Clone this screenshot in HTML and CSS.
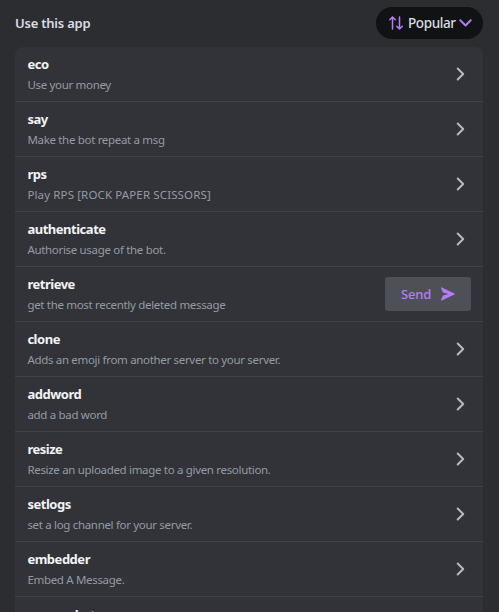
FILE: index.html
```
<!DOCTYPE html>
<html lang="en">
<head>
<meta charset="utf-8">
<title>App commands</title>
<link rel="stylesheet" href="styles.css">
</head>
<body>
<svg width="0" height="0" class="defs"><symbol id="chev" viewBox="0 0 10 16"><path d="M1.700 2.500 7.200 8 1.700 13.500"/></symbol></svg>
<main class="panel">
<header class="header">
<h1 class="heading">Use this app</h1>
<button class="sort">
<svg class="sort-arrows" width="14" height="14" viewBox="0 0 14 14"><path d="M3.5 13V1M.8 3.8 3.5 1l2.8 2.8M10.5 1v12M7.7 10.2l2.8 2.8 2.8-2.8"/></svg>
<span class="sort-label">Popular</span>
<svg class="sort-chevron" width="13" height="8" viewBox="0 0 13 8"><path d="M1.3 1.3 6.500 6.500l5.200-5.200"/></svg>
</button>
</header>
<ul class="list">
<li class="row"><div class="text"><h2 class="name">eco</h2><p class="desc">Use your money</p></div><svg class="go"><use href="#chev"/></svg></li>
<li class="row"><div class="text"><h2 class="name">say</h2><p class="desc">Make the bot repeat a msg</p></div><svg class="go"><use href="#chev"/></svg></li>
<li class="row"><div class="text"><h2 class="name">rps</h2><p class="desc caps">Play RPS [ROCK PAPER SCISSORS]</p></div><svg class="go"><use href="#chev"/></svg></li>
<li class="row"><div class="text"><h2 class="name">authenticate</h2><p class="desc">Authorise usage of the bot.</p></div><svg class="go"><use href="#chev"/></svg></li>
<li class="row"><div class="text"><h2 class="name">retrieve</h2><p class="desc">get the most recently deleted message</p></div><button class="send"><span>Send</span><svg width="14" height="14" viewBox="0 0 14 14"><path d="M.8.4c-.5-.3-1 .1-.8.7L2 5.600l5.500 1.400L2 8.400 0 12.900c-.2.600.3 1 .8.700l12.600-6c.6-.3.600-.9 0-1.200z"/></svg></button></li>
<li class="row"><div class="text"><h2 class="name">clone</h2><p class="desc">Adds an emoji from another server to your server.</p></div><svg class="go"><use href="#chev"/></svg></li>
<li class="row"><div class="text"><h2 class="name">addword</h2><p class="desc">add a bad word</p></div><svg class="go"><use href="#chev"/></svg></li>
<li class="row"><div class="text"><h2 class="name">resize</h2><p class="desc">Resize an uploaded image to a given resolution.</p></div><svg class="go"><use href="#chev"/></svg></li>
<li class="row"><div class="text"><h2 class="name">setlogs</h2><p class="desc">set a log channel for your server.</p></div><svg class="go"><use href="#chev"/></svg></li>
<li class="row"><div class="text"><h2 class="name">embedder</h2><p class="desc">Embed A Message.</p></div><svg class="go"><use href="#chev"/></svg></li>
<li class="row"><div class="text"><h2 class="name">removebot</h2></div></li>
</ul>
</main>
</body>
</html>
```
FILE: styles.css
```
* { box-sizing: border-box; }
html, body { margin: 0; height: 612px; overflow: hidden; background: #2b2d31; }
body { font-family: "Noto Sans", "Liberation Sans", sans-serif; }
.defs { display: block; }
.panel { height: 612px; padding: 7px 16px 0 15px; overflow: hidden; }
.header { display: flex; justify-content: space-between; align-items: center; height: 32px; margin-bottom: 8px; }
.heading { margin: 0; font-size: 13px; line-height: 18px; font-weight: 600; letter-spacing: -0.22px; color: #dbdee1; }
.sort { display: flex; align-items: center; width: 107px; height: 32px; padding: 0 0 0 13px; border: 0; border-radius: 16px; background: #111214; color: #dbdee1; font: 500 13.5px/18px "Noto Sans", sans-serif; letter-spacing: -0.4px; }
.sort svg { flex: none; fill: none; stroke: #b57cf5; stroke-linecap: round; stroke-linejoin: round; }
.sort-arrows { stroke-width: 1.5; }
.sort-label { width: 47px; margin: 0 4px 0 5px; white-space: nowrap; }
.sort-chevron { stroke-width: 2; }
.list { list-style: none; margin: 0; padding: 0; background: #313338; border-radius: 8px; }
.row { display: flex; justify-content: space-between; align-items: center; height: 55px; padding: 0 12px; border-bottom: 1px solid #404247; }
.text { height: 54px; padding: 7px 0 0 0.4px; }
.row:last-child .text { padding-top: 8px; }
.name { margin: 0; font-size: 13px; line-height: 20px; font-weight: 700; letter-spacing: -0.48px; color: #f2f3f5; }
.row:last-child .name { letter-spacing: -0.3px; }
.desc { margin: 1px 0 0; font-size: 11.5px; line-height: 20px; letter-spacing: -0.32px; color: #949ba4; white-space: nowrap; }
.caps { letter-spacing: 0.13px; }
.go { width: 10px; height: 16px; margin-right: 5px; fill: none; stroke: #b5bac1; stroke-width: 2; stroke-linecap: round; stroke-linejoin: round; }
.send { display: flex; align-items: center; justify-content: space-between; width: 86px; height: 34px; padding: 0 16px; border: 0; border-radius: 3px; background: #4e5058; color: #b57cf5; font: 500 13px/18px "Noto Sans", sans-serif; letter-spacing: -0.2px; }
.send svg { fill: #b57cf5; }
```
